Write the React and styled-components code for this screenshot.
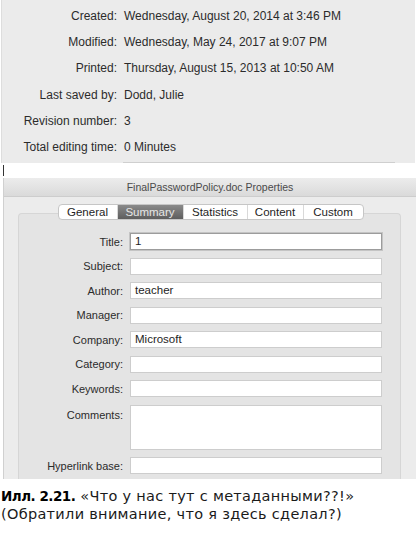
import React from "react";
import styled, { createGlobalStyle } from "styled-components";

const Global = createGlobalStyle`
  html, body { margin: 0; padding: 0; background: #ffffff; }
  body {
    width: 418px;
    height: 539px;
    overflow: hidden;
    font-family: "Liberation Sans", Arial, sans-serif;
  }
`;

const Page = styled.div`
  width: 418px;
  display: flex;
  flex-direction: column;
`;

const InfoPanel = styled.section`
  margin-left: 1px;
  width: 414px;
  height: 163px;
  box-sizing: border-box;
  background: #ebebeb;
  border-left: 1px solid #dddddd;
  padding-top: 3px;
  display: flex;
  flex-direction: column;
`;

const InfoRow = styled.div`
  display: grid;
  grid-template-columns: 115px 1fr;
  column-gap: 7px;
  height: 26.2px;
  align-items: center;
  font-size: 12px;
  color: #2b2b2b;
`;

const InfoLabel = styled.span`
  text-align: right;
  white-space: nowrap;
`;

const InfoValue = styled.span`
  white-space: nowrap;
`;

const Separator = styled.div`
  margin-top: auto;
  margin-left: 121px;
  width: 272px;
  height: 1px;
  background: #cfcfcf;
`;

const CaretStrip = styled.div`
  height: 15px;
  display: flex;
  align-items: flex-start;
`;

const Caret = styled.div`
  margin: 2px 0 0 3px;
  width: 1px;
  height: 11px;
  background: #333333;
`;

const Window = styled.div`
  margin-left: 3px;
  width: 413px;
  height: 301px;
  box-sizing: border-box;
  border-left: 1px solid #d0d0d0;
  background: #ececec;
  overflow: hidden;
  display: flex;
  flex-direction: column;
`;

const TitleBar = styled.div`
  height: 18px;
  line-height: 18px;
  text-align: center;
  font-size: 10.5px;
  color: #4a4a4a;
  background: linear-gradient(#ececec, #dadada);
  border-bottom: 1px solid #cdcdcd;
  flex: none;
`;

const Body = styled.div`
  flex: 1;
  display: flex;
  flex-direction: column;
  padding: 7px 15px 0 14px;
`;

const Tabs = styled.div`
  align-self: center;
  position: relative;
  z-index: 1;
  display: flex;
  height: 16px;
  box-sizing: border-box;
  border: 1px solid #c6c6c6;
  border-radius: 4px;
  background: #ffffff;
  overflow: hidden;
  margin-left: 2px;
`;

const Tab = styled.div`
  width: ${(p) => p.$w}px;
  box-sizing: border-box;
  text-align: center;
  font-size: 11.5px;
  line-height: 14px;
  color: ${(p) => (p.$active ? "#e6e6e6" : "#1e1e1e")};
  background: ${(p) =>
    p.$active ? "linear-gradient(#8a8a8a, #5e5e5e)" : "transparent"};
  & + & {
    border-left: 1px solid #d9d9d9;
  }
`;

const GroupBox = styled.div`
  flex: 1;
  margin-top: -7px;
  background: #e4e4e4;
  border: 1px solid #d6d6d6;
  border-bottom: none;
  border-radius: 4px 4px 0 0;
  padding-top: 19px;
`;

const Form = styled.div`
  display: grid;
  grid-template-columns: 104px 252px;
  column-gap: 7px;
  row-gap: 7.5px;
`;

const FieldLabel = styled.label`
  text-align: right;
  font-size: 11px;
  color: #2b2b2b;
  white-space: nowrap;
  align-self: ${(p) => (p.$top ? "start" : "center")};
  padding-top: ${(p) => (p.$top ? "4px" : "0")};
`;

const Field = styled.div`
  height: ${(p) => (p.$tall ? 45 : 17)}px;
  box-sizing: border-box;
  background: #ffffff;
  border: 1px solid ${(p) => (p.$focus ? "#9c9c9c" : "#cdcdcd")};
  box-shadow: ${(p) => (p.$focus ? "0 0 0 1px #c4c4c4" : "none")};
  padding-left: 4px;
  font-size: 11.5px;
  line-height: 15px;
  color: #1e1e1e;
  display: flex;
  align-items: flex-start;
`;

const Caption = styled.div`
  margin-top: 8px;
  padding-left: 1px;
  font-family: "DejaVu Sans", "Noto Sans", sans-serif;
  font-size: 14.5px;
  letter-spacing: 0.3px;
  line-height: 18px;
  color: #1a1a1a;
`;

const CaptionLabel = styled.b`
  font-size: 13.5px;
  font-weight: 700;
  letter-spacing: -0.5px;
  color: #000;
`;

const info = [
  ["Created:", "Wednesday, August 20, 2014 at 3:46 PM"],
  ["Modified:", "Wednesday, May 24, 2017 at 9:07 PM"],
  ["Printed:", "Thursday, August 15, 2013 at 10:50 AM"],
  ["Last saved by:", "Dodd, Julie"],
  ["Revision number:", "3"],
  ["Total editing time:", "0 Minutes"],
];

const tabs = [
  ["General", 58],
  ["Summary", 66],
  ["Statistics", 64],
  ["Content", 56],
  ["Custom", 60],
];

const fields = [
  { label: "Title:", value: "1", focus: true },
  { label: "Subject:", value: "" },
  { label: "Author:", value: "teacher" },
  { label: "Manager:", value: "" },
  { label: "Company:", value: "Microsoft" },
  { label: "Category:", value: "" },
  { label: "Keywords:", value: "" },
  { label: "Comments:", value: "", tall: true },
  { label: "Hyperlink base:", value: "" },
];

export default function App() {
  return (
    <Page>
      <Global />
      <InfoPanel>
        {info.map(([l, v]) => (
          <InfoRow key={l}>
            <InfoLabel>{l}</InfoLabel>
            <InfoValue>{v}</InfoValue>
          </InfoRow>
        ))}
        <Separator />
      </InfoPanel>
      <CaretStrip>
        <Caret />
      </CaretStrip>
      <Window>
        <TitleBar>FinalPasswordPolicy.doc Properties</TitleBar>
        <Body>
          <Tabs>
            {tabs.map(([t, w]) => (
              <Tab key={t} $w={w} $active={t === "Summary"}>
                {t}
              </Tab>
            ))}
          </Tabs>
          <GroupBox>
            <Form>
              {fields.map((f) => (
                <React.Fragment key={f.label}>
                  <FieldLabel $top={f.tall}>{f.label}</FieldLabel>
                  <Field $focus={f.focus} $tall={f.tall}>
                    {f.value}
                  </Field>
                </React.Fragment>
              ))}
            </Form>
          </GroupBox>
        </Body>
      </Window>
      <Caption>
        <CaptionLabel>Илл. 2.21.</CaptionLabel> «Что у нас тут с метаданными??!»
        <br />
        (Обратили внимание, что я здесь сделал?)
      </Caption>
    </Page>
  );
}
